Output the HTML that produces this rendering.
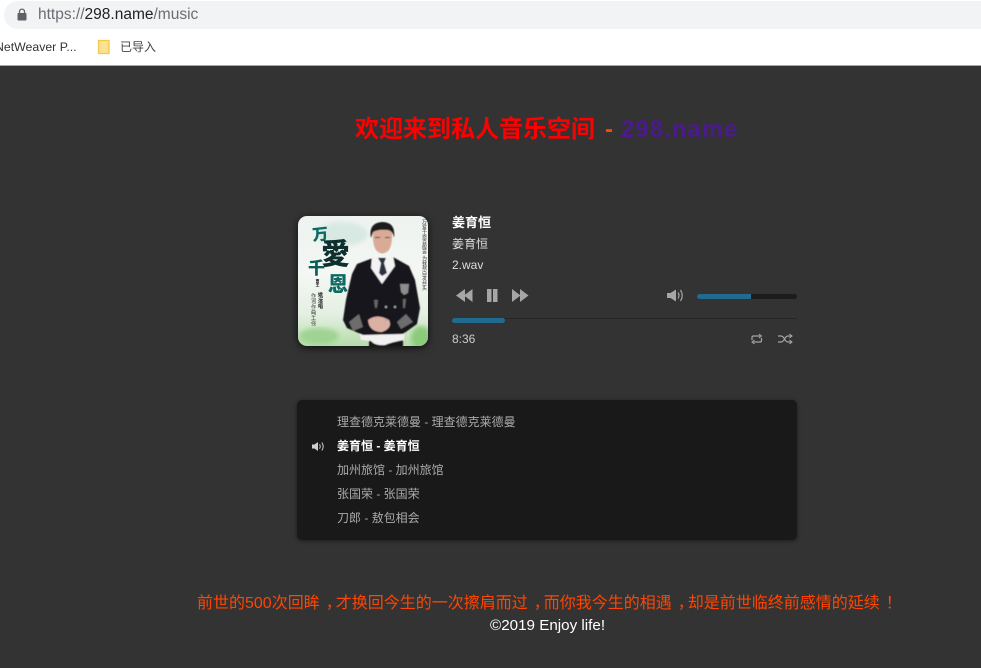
<!DOCTYPE html>
<html lang="zh">
<head>
<meta charset="utf-8">
<title>298.name music</title>
<style>
html,body{margin:0;padding:0;width:981px;height:668px;overflow:hidden;background:#333;font-family:"Liberation Sans","Noto Sans CJK SC",sans-serif}
.a{position:absolute;white-space:nowrap}
#top{position:absolute;left:0;top:0;width:981px;height:65px;background:#fff;border-bottom:1px solid #a8a8a8}
#url{position:absolute;left:4px;top:1px;width:990px;height:28px;background:#f1f3f4;border-radius:14px}
.li{position:absolute;left:337px;font-size:12px;line-height:16px;color:#aaa;white-space:nowrap}
.p{position:relative;left:6px}
</style>
</head>
<body>
<div id="top">
  <div id="url"></div>
  <svg class="a" style="left:17px;top:8px" width="10" height="13" viewBox="0 0 10 13"><path d="M2.500 5V3.600a2.500 2.500 0 0 1 5 0V5" fill="none" stroke="#5f6368" stroke-width="1.300"/><rect x="0.500" y="5" width="9" height="7.500" rx="1" fill="#5f6368"/></svg>
  <div class="a" style="left:38px;top:6px;font-size:15.500px;line-height:18px;color:#6a6e73">https://<span style="color:#202124">298.name</span>/music</div>
  <div class="a" style="left:-5px;top:40px;font-size:12.300px;line-height:15px;color:#333">NetWeaver P...</div>
  <svg class="a" style="left:97px;top:39px" width="14" height="16" viewBox="0 0 14 16"><path d="M1.500 1.500h10.500v13H1.500z" fill="#fde293" stroke="#f2c94c" stroke-width="1.300"/></svg>
  <div class="a" style="left:120px;top:40px;font-size:12px;line-height:15px;color:#444">已导入</div>
</div>

<div class="a" style="left:355px;top:115px;font-size:24px;line-height:30px;font-weight:bold;color:#f00">欢迎来到私人音乐空间</div>
<div class="a" style="left:605px;top:115px;font-size:24px;line-height:30px;font-weight:bold;color:#ff4500">-</div>
<div class="a" style="left:621px;top:115px;font-size:24px;line-height:30px;font-weight:bold;letter-spacing:1px;color:#4b1a8c">298.name</div>

<svg class="a" style="left:297px;top:216px;filter:drop-shadow(0 2px 4px rgba(0,0,0,.7))" width="132" height="131" viewBox="0 0 132 131">
  <defs>
    <clipPath id="c"><rect x="1" y="0" width="130" height="130" rx="9"/></clipPath>
    <linearGradient id="bg" x1="0" y1="0" x2="0" y2="1"><stop offset="0" stop-color="#eef3f0"/><stop offset=".45" stop-color="#f4f7f3"/><stop offset=".75" stop-color="#e4f0e2"/><stop offset="1" stop-color="#b5dba8"/></linearGradient>
    <filter id="b"><feGaussianBlur stdDeviation="2.500"/></filter>
    <filter id="s"><feGaussianBlur stdDeviation=".5"/></filter>
  </defs>
  <g clip-path="url(#c)">
    <rect width="132" height="131" fill="url(#bg)"/>
    <ellipse cx="22" cy="120" rx="20" ry="8" fill="#9fd392" filter="url(#b)"/>
    <ellipse cx="124" cy="122" rx="10" ry="12" fill="#8bcb7a" filter="url(#b)"/>
    <ellipse cx="45" cy="18" rx="26" ry="12" fill="#d8e8e2" filter="url(#b)"/>
    <g filter="url(#s)">
      <path d="M72 131V120L106 120V131Z" fill="#141418"/>
      <path d="M62 114L108 112L107 124Q95 126 88 129Q78 130 74 125L64 124Z" fill="#f1f1f1"/>
      <path d="M76 42L60 48L55 58L49 84L46 104L50 112L66 119L106 118L120 108L123 92L118 64L112 50L96 41L86 48Z" fill="#13131a"/>
      <path d="M75 40L82 44L86 44L96 40L98 50L85 68L74 52Z" fill="#f3f3f3"/>
      <path d="M81 42L89 42L87 47L90 57L85 60L82 57L84 47Z" fill="#2a3140"/>
      <path d="M76 12Q75 28 79 34Q85 41 92 34Q96 27 95 12Z" fill="#d9aa97"/>
      <path d="M74 22Q71 7 85 6Q99 6 97 22Q96 15 91 14Q81 13 76 16Z" fill="#1d1a1a"/>
      <path d="M78 21h5v1h-5zM88 21h5v1h-5z" fill="#332"/>
      <path d="M71 104Q80 97 92 104Q96 112 85 116Q72 116 71 104Z" fill="#dcb0a2"/>
      <path d="M52 106L62 98L66 111L56 115Z" fill="#6d6d6d"/>
      <path d="M100 106L109 98L116 106L104 113Z" fill="#6d6d6d"/>
      <path d="M103 68L112 68L111 77L107 79L104 76Z" fill="#8d8d8d"/>
      <path d="M77 84L81 84L80 92L78 92Z" fill="#666"/>
      <path d="M106 83L109 83L108 92L106 92Z" fill="#666"/>
      <circle cx="89" cy="91" r="1.200" fill="#aaa"/><circle cx="98" cy="91" r="1.200" fill="#aaa"/><circle cx="89" cy="104" r="1.200" fill="#aaa"/>
    </g>
    <text x="15" y="24" font-size="16" font-weight="900" fill="#0b6b63" transform="rotate(-6 23 16)" font-family="'Noto Sans CJK SC',sans-serif">万</text>
    <text x="24" y="48" font-size="29" font-weight="900" fill="#0d2f2e" font-family="'Noto Sans CJK SC',sans-serif">愛</text>
    <text x="11" y="58" font-size="17" font-weight="900" fill="#0b5e58" font-family="'Noto Sans CJK SC',sans-serif">千</text>
    <text x="31" y="75" font-size="20" font-weight="900" fill="#0f6a64" font-family="'Noto Sans CJK SC',sans-serif">恩</text>
    <text x="21" y="63" font-size="4" font-weight="bold" fill="#222" style="writing-mode:vertical-rl">曹王</text>
    <text x="23" y="76" font-size="5" font-weight="bold" fill="#222" style="writing-mode:vertical-rl">姚\演唱</text>
    <text x="16" y="77" font-size="5" fill="#333" style="writing-mode:vertical-rl">作词\作曲\工强</text>
    <text x="127" y="3" font-size="5" fill="#333" style="writing-mode:vertical-rl">万爱千恩百般苦 为我熬白发丝头</text>
  </g>
</svg>

<div class="a" style="left:452px;top:215px;font-size:13px;line-height:16px;font-weight:bold;color:#fff">姜育恒</div>
<div class="a" style="left:452px;top:236px;font-size:12px;line-height:16px;color:#ddd">姜育恒</div>
<div class="a" style="left:452px;top:257px;font-size:12px;line-height:16px;color:#ddd">2.wav</div>

<svg class="a" style="left:456px;top:288px" width="73" height="15" viewBox="0 0 73 15" fill="#a6a6a6">
  <path d="M0 7.500 9 1v13zM8 7.500 16.500 1v13z"/>
  <rect x="31" y="1" width="4.500" height="13"/><rect x="37" y="1" width="4.500" height="13"/>
  <path d="M56 1l8.500 6.500L56 14zM64 1l8.500 6.500L64 14z"/>
</svg>
<svg class="a" style="left:667px;top:288px" width="17" height="15" viewBox="0 0 17 15" fill="none">
  <path d="M0 5h3.500L9 1.500v12L3.500 10H0z" fill="#a6a6a6"/>
  <path d="M11 4.500q2 3 0 6M13.500 2q3.500 5.500 0 11" stroke="#a6a6a6" stroke-width="1.200"/>
</svg>
<div class="a" style="left:697px;top:294px;width:100px;height:5px;background:#1c1c1c;border-radius:3px"></div>
<div class="a" style="left:697px;top:294px;width:54px;height:5px;background:#216c8e;border-radius:3px 0 0 3px"></div>

<div class="a" style="left:452px;top:318px;width:345px;height:1px;background:#262626"></div>
<div class="a" style="left:452px;top:318px;width:53px;height:5px;background:#216c8e;border-radius:3px"></div>
<div class="a" style="left:452px;top:331px;font-size:12px;line-height:16px;color:#ccc">8:36</div>
<svg class="a" style="left:750px;top:333px" width="44" height="12" viewBox="0 0 44 12" fill="none" stroke="#a6a6a6" stroke-width="1.200">
  <path d="M2 7V4.500Q2 3 3.500 3H10M11.500 5V7.500Q11.500 9 10 9H3.500"/>
  <path d="M9 1l2.500 2L9 5M4.500 7L2 9l2.500 2" stroke-width="1"/>
  <path d="M28 3h3q2 0 3.500 3t3.500 3h3M28 9h3q2 0 3.500-3t3.500-3h3"/>
  <path d="M39.500 1l2.500 2-2.500 2M39.500 7l2.500 2-2.500 2" stroke-width="1"/>
</svg>

<div class="a" style="left:297px;top:400px;width:500px;height:140px;background:#191919;border-radius:5px;box-shadow:0 1px 4px rgba(0,0,0,.45)"></div>
<div class="li" style="top:414px">理查德克莱德曼 - 理查德克莱德曼</div>
<div class="li" style="top:438px;color:#fff;font-weight:bold">姜育恒 - 姜育恒</div>
<div class="li" style="top:462px">加州旅馆 - 加州旅馆</div>
<div class="li" style="top:486px">张国荣 - 张国荣</div>
<div class="li" style="top:510px">刀郎 - 敖包相会</div>
<svg class="a" style="left:312px;top:441px" width="13" height="11" viewBox="0 0 13 11" fill="none">
  <path d="M0 3.500h2.500L6 1v9L2.500 7.500H0z" fill="#cfcfcf"/>
  <path d="M7.500 3.300q1.500 2.200 0 4.400M9.800 1.500q2.800 4 0 8" stroke="#cfcfcf" stroke-width="1"/>
</svg>

<div class="a" style="left:197px;top:594px;font-size:16px;line-height:20px;color:#ff4500">前世的500次回眸<span class="p">，</span>才换回今生的一次擦肩而过<span class="p">，</span>而你我今生的相遇<span class="p">，</span>却是前世临终前感情的延续<span class="p">！</span></div>
<div class="a" style="left:490px;top:617px;font-size:15.200px;line-height:18px;color:#fff">©2019 Enjoy life!</div>
</body>
</html>
